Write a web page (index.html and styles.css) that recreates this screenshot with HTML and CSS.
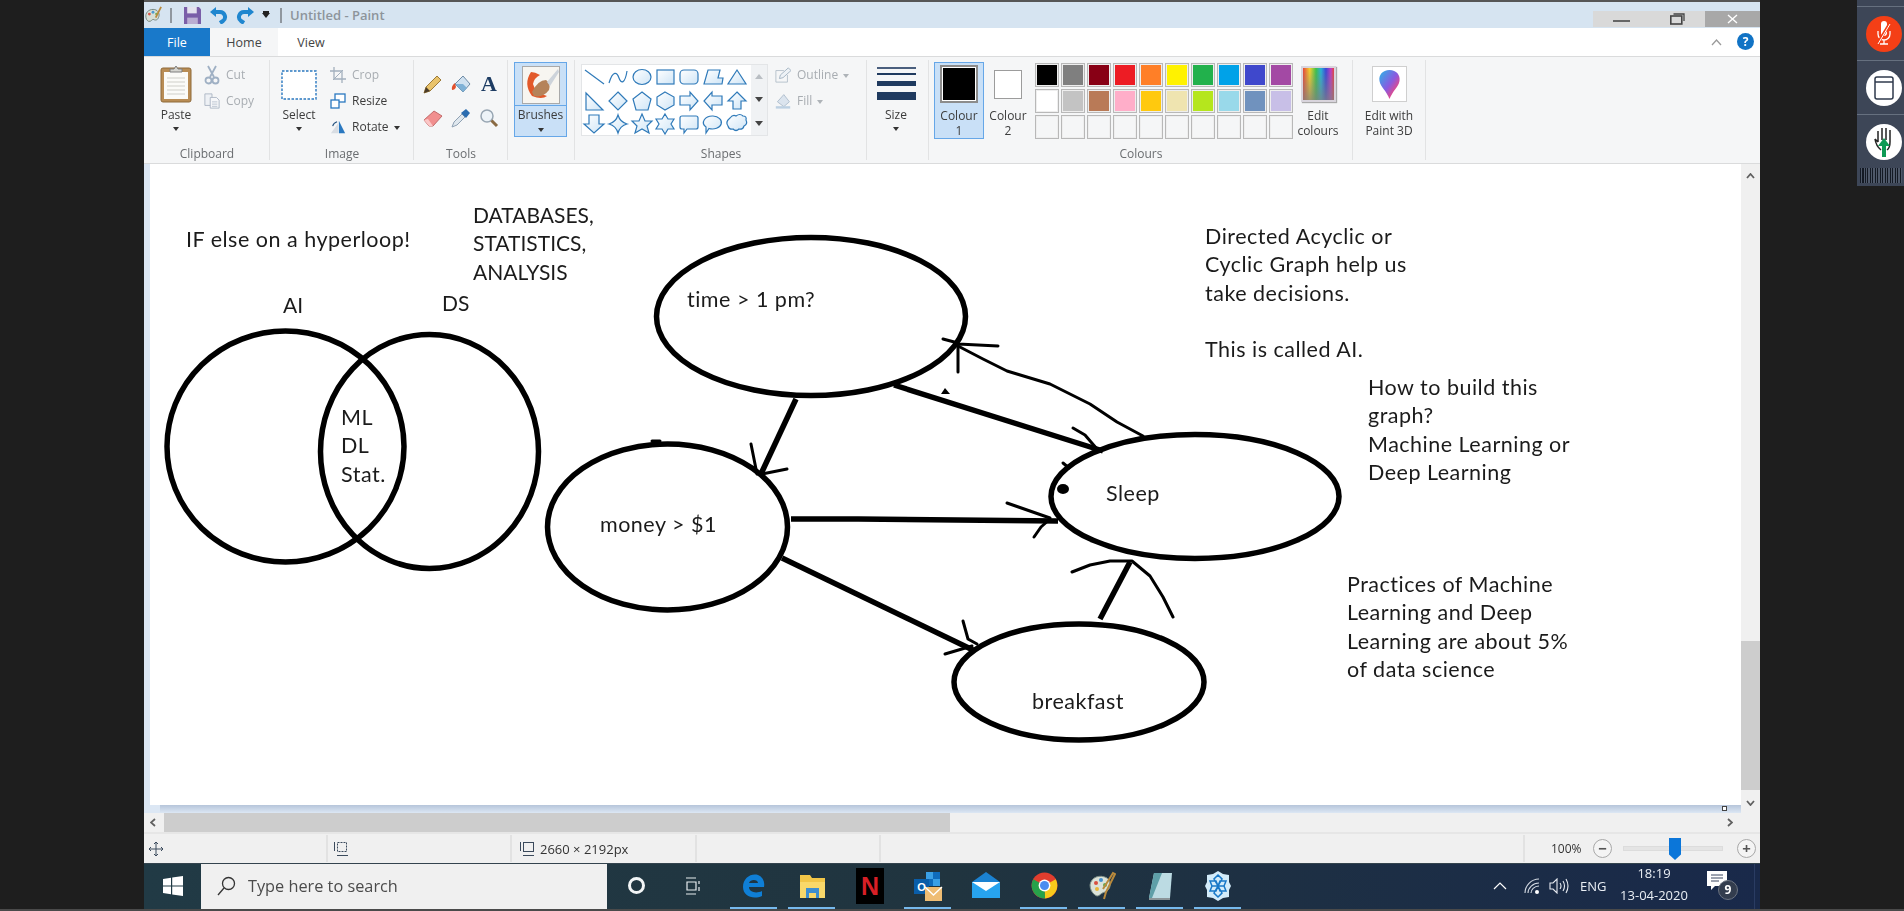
FILE: index.html
```html
<!DOCTYPE html>
<html lang="en">
<head>
<meta charset="utf-8">
<title>Untitled - Paint</title>
<link rel="stylesheet" href="styles.css">
</head>
<body>
<div class="screen">
  <div class="gutter-left"></div>
  <div class="window">
    <div class="topline"></div>
    <header class="titlebar">
      <svg class="qat-app" viewBox="0 0 20 20"><path d="M2 11c0-5 5-8 10-7 4 1 6 5 4 9-1 3-4 3-5 2-2-1-3 3-6 2-2-1-3-3-3-6z" fill="#d8dfd6" stroke="#6e7f77"/><circle cx="6" cy="9" r="1.6" fill="#d9574a"/><circle cx="10" cy="7" r="1.6" fill="#4e9ad0"/><circle cx="14" cy="9" r="1.6" fill="#6fae55"/><path d="M13 13 19 1" stroke="#b98a3c" stroke-width="2"/></svg>
      <span class="qat-sep"></span>
      <svg class="qat-save" viewBox="0 0 16 16"><path d="M0 0h14l2 2v14H0z" fill="#7a5ea8"/><path d="M3 0h9v6H3z" fill="#e4e2ee"/><path d="M3 10h10v6H3z" fill="#b9add2"/></svg>
      <svg class="qat-undo" viewBox="0 0 18 18"><path d="M3 6h7a5 5 0 0 1 3 9l-3 2" fill="none" stroke="#1f86cf" stroke-width="4"/><path d="M0 6l6-5v10z" fill="#1f86cf"/></svg>
      <svg class="qat-redo" viewBox="0 0 18 18"><path d="M15 6H8a5 5 0 0 0-3 9l3 2" fill="none" stroke="#1f86cf" stroke-width="4"/><path d="M18 6l-6-5v10z" fill="#1f86cf"/></svg>
      <span class="qat-drop"></span>
      <span class="qat-sep qat-sep-b"></span>
      <span class="app-title">Untitled - Paint</span>
      <div class="win-controls">
        <span class="win-btn win-min"><i class="min-glyph"></i></span>
        <span class="win-btn win-max"><svg width="15" height="12" viewBox="0 0 15 12"><rect x=".8" y="3" width="11" height="8" fill="none" stroke="#444" stroke-width="1.6"/><path d="M3.5 1h10.500v7" fill="none" stroke="#444" stroke-width="1.300"/></svg></span>
        <span class="win-btn win-close"><svg width="11" height="10" viewBox="0 0 11 10"><path d="M1 1l9 8M10 1L1 9" stroke="#fff" stroke-width="1.400"/></svg></span>
      </div>
    </header>
    <nav class="tabs">
      <span class="tab tab-file">File</span>
      <span class="tab tab-home">Home</span>
      <span class="tab tab-view">View</span>
      <svg class="collapse" width="11" height="7" viewBox="0 0 11 7"><path d="M1 6l4.500-5L10 6" fill="none" stroke="#9a9a9a" stroke-width="1.300"/></svg>
      <span class="help">?</span>
    </nav>
    <section class="ribbon">
      <div class="group g-clipboard">
        <div class="g-body">
          <div class="big-btn paste">
            <svg class="big-icon" width="32" height="38" viewBox="0 0 32 38"><rect x="1" y="3" width="30" height="34" rx="2" fill="#b98d55" stroke="#8f6b3b"/><rect x="4" y="7" width="24" height="27" fill="#fbfbf8"/><path d="M7 13h18M7 17h18M7 21h18M7 25h18M7 29h18" stroke="#cfcfc9"/><path d="M10 7V4h4l2-3 2 3h4v3z" fill="#d5d5d0" stroke="#7f7f7f"/></svg>
            <span class="big-label">Paste</span>
            <i class="caret"></i>
          </div>
          <div class="small-list sl-clip">
            <div class="small-row dim"><svg width="16" height="20" viewBox="0 0 16 20"><path d="M4 1l6 11M12 1L6 12" stroke="#9fb0c4" stroke-width="1.800"/><circle cx="4.500" cy="15.500" r="3" fill="none" stroke="#9fb0c4" stroke-width="1.800"/><circle cx="11.500" cy="15.500" r="3" fill="none" stroke="#9fb0c4" stroke-width="1.800"/></svg><span>Cut</span></div>
            <div class="small-row dim"><svg width="18" height="18" viewBox="0 0 18 18"><path d="M1 1h8v13H1z" fill="#eef1f5" stroke="#aab5c3"/><path d="M7 5h7l3 3v9H7z" fill="#f6f7f9" stroke="#aab5c3"/><path d="M9 10h6M9 12.500h6M9 15h6" stroke="#b8c2ce"/></svg><span>Copy</span></div>
          </div>
        </div>
        <div class="g-label">Clipboard</div>
      </div>
      <div class="group g-image">
        <div class="g-body">
          <div class="big-btn select">
            <svg class="big-icon" width="36" height="38" viewBox="0 0 36 38"><rect x="1" y="6" width="34" height="28" fill="#fff" stroke="#2a78c0" stroke-width="1.400" stroke-dasharray="2.500 1.500"/></svg>
            <span class="big-label">Select</span>
            <i class="caret"></i>
          </div>
          <div class="small-list sl-image">
            <div class="small-row dim"><svg width="16" height="16" viewBox="0 0 16 16"><path d="M4 0v12h12M0 4h12v12" fill="none" stroke="#a3b0be" stroke-width="1.300"/><path d="M3 13L13 3" stroke="#a3b0be"/></svg><span>Crop</span></div>
            <div class="small-row"><svg width="16" height="16" viewBox="0 0 16 16"><rect x="5" y="1" width="10" height="8" fill="#fff" stroke="#2a78c0" stroke-width="1.300"/><rect x="1" y="7" width="8" height="8" fill="#fff" stroke="#2a78c0" stroke-width="1.300"/></svg><span>Resize</span></div>
            <div class="small-row"><svg width="18" height="16" viewBox="0 0 18 16"><path d="M1 15L9 4v11z" fill="#d8dde3"/><path d="M10 1l7 14h-7z" fill="#2a78c0"/><path d="M3 7q1-4 5-5" fill="none" stroke="#26527f" stroke-width="1.200"/></svg><span>Rotate</span><i class="caret caret-inline"></i></div>
          </div>
        </div>
        <div class="g-label">Image</div>
      </div>
      <div class="group g-tools">
        <div class="g-body">
          <div class="tool-grid">
            <svg width="20" height="20" viewBox="0 0 20 20"><path d="M3 13L14 2l4 4L7 17 1 19z" fill="#e9c36b" stroke="#9c7a38"/><path d="M1 19l2-6 4 4z" fill="#4a3c2a"/></svg>
            <svg width="22" height="22" viewBox="0 0 22 22"><path d="M5 11l8-8 7 8-7 8z" fill="#cfe1f0" stroke="#6d8aa5"/><path d="M5 11l8 0 4 4-4 4z" fill="#7fb1d6"/><path d="M5 10q-4 3-3 7 3 0 4-3z" fill="#e1502c"/></svg>
            <span class="tool-a">A</span>
            <svg width="20" height="18" viewBox="0 0 20 18"><path d="M1 11L11 2l8 5-9 10H6z" fill="#f18f8f" stroke="#c26a6a"/><path d="M1 11l5 6h4l-5-7z" fill="#fbc7c7"/></svg>
            <svg width="20" height="20" viewBox="0 0 20 20"><path d="M1 19l2-5 8-8 3 3-8 8z" fill="#dfe7ee" stroke="#8fa1b3"/><path d="M10 5l5-4 4 4-4 5z" fill="#2a6cb0"/></svg>
            <svg width="20" height="20" viewBox="0 0 20 20"><circle cx="8" cy="8" r="6" fill="#edf3f8" stroke="#98a6b3" stroke-width="1.500"/><path d="M12.500 12.500L18 18" stroke="#8a6a43" stroke-width="3"/></svg>
          </div>
        </div>
        <div class="g-label"><span>Tools</span></div>
      </div>
      <div class="group g-brushes">
        <div class="g-body">
          <div class="brush-btn">
            <div class="brush-top">
              <svg width="38" height="38" viewBox="0 0 38 38"><rect x=".5" y=".5" width="37" height="37" fill="#f7f5f0" stroke="#a9a9a9"/><path d="M9 6q-8 12 1 24 10 4 15 0-12-3-14-12 1-6 7-9-5-3-9-3z" fill="#e2592a"/><path d="M10 26q6-12 14-12 5 3 3 10-6 8-15 6z" fill="#b5835a"/><path d="M25 16L36 3l1 3-9 14z" fill="#cdd3da"/></svg>
            </div>
            <div class="brush-bottom">
              <span class="big-label">Brushes</span>
              <i class="caret"></i>
            </div>
          </div>
        </div>
        <div class="g-label"></div>
      </div>
      <div class="group g-shapes">
        <div class="g-body">
          <div class="gallery">
            <svg class="gallery-shapes" width="169" height="70" viewBox="582 65 169 70">
              <defs><linearGradient id="sf" x1="0" y1="0" x2="1" y2="1"><stop offset="0" stop-color="#fff"/><stop offset="1" stop-color="#cfe5f6"/></linearGradient></defs>
              <path class="sn" d="M585 70L604 84"/>
              <path class="sn" d="M609 83C613 70 617 72 619 78S625 84 627 71"/>
              <ellipse class="sh" cx="642" cy="77" rx="9" ry="7.500"/>
              <rect class="sh" x="657" y="70" width="17" height="14"/>
              <rect class="sh" x="680" y="70" width="18" height="14" rx="4"/>
              <path class="sh" d="M704 84L708 70H720L718 78H723L722 84Z"/>
              <path class="sh" d="M737 70L746 84H728Z"/>
              <path class="sh" d="M586 93L603 110H586Z"/>
              <path class="sh" d="M618 92L627 101L618 110L609 101Z"/>
              <path class="sh" d="M642 92L651 99L648 110H636L633 99Z"/>
              <path class="sh" d="M665 92L674 97V105L665 110L657 105V97Z"/>
              <path class="sh" d="M680 96H690V92L698 101L690 110V105H680Z"/>
              <path class="sh" d="M722 96H712V92L704 101L712 110V105H722Z"/>
              <path class="sh" d="M737 92L746 101H741V109H733V101H728Z"/>
              <path class="sh" d="M589 115H599V124H604L594 133L584 124H589Z"/>
              <path class="sh" d="M618 115Q620 122 627 124Q620 126 618 133Q616 126 609 124Q616 122 618 115Z"/>
              <path class="sh" d="M642 114L645 121L652 121L647 126L649 133L642 129L635 133L637 126L632 121L639 121Z"/>
              <path class="sh" d="M665 114L668 119H674L671 124L674 129H668L665 134L662 129H656L659 124L656 119H662Z"/>
              <path class="sh" d="M682 116H696Q698 116 698 118V127Q698 129 696 129H687L684 133V129H682Q680 129 680 127V118Q680 116 682 116Z"/>
              <path class="sh" d="M713 116a9 6.500 0 1 1-4 12.500L706 133V127a9 6.500 0 0 1 7-11Z"/>
              <path class="sh" d="M730 118q3-4 6-2q4-3 7 0q4 0 3 4q2 4-2 6q-1 4-5 3q-3 3-6 0q-4 1-5-3q-3-4 2-8Z"/>
            </svg>
            <div class="gallery-scroll">
              <span class="gs gs-up"></span>
              <span class="gs gs-down"></span>
              <span class="gs gs-more"></span>
            </div>
          </div>
          <div class="small-list sl-shape">
            <div class="small-row dim"><svg width="18" height="18" viewBox="0 0 18 18"><path d="M1 4h9M1 4v13h13V9" fill="none" stroke="#b2bdc9"/><path d="M5 13l1-4 9-8 3 3-9 8z" fill="#eef2f6" stroke="#9fb0c0"/></svg><span>Outline</span><i class="caret caret-inline caret-dim"></i></div>
            <div class="small-row dim"><svg width="20" height="20" viewBox="0 0 20 20"><path d="M3 11l8-9 7 9-7 6z" fill="#dbe4ee" stroke="#a6b6c6"/><path d="M1 18h18" stroke="#bcd0e2" stroke-width="3"/></svg><span>Fill</span><i class="caret caret-inline caret-dim"></i></div>
          </div>
        </div>
        <div class="g-label">Shapes</div>
      </div>
      <div class="group g-size">
        <div class="g-body">
          <div class="big-btn size">
            <div class="big-icon size-lines"><i class="sl1"></i><i class="sl2"></i><i class="sl3"></i><i class="sl4"></i></div>
            <span class="big-label">Size</span>
            <i class="caret"></i>
          </div>
        </div>
        <div class="g-label"></div>
      </div>
      <div class="group g-colours">
        <div class="g-body">
          <div class="colour-btn colour-on">
            <div class="big-icon colour-box"><span class="swatch-one"></span></div>
            <span class="two-line">Colour<br>1</span>
          </div>
          <div class="colour-btn">
            <div class="big-icon colour-box"><span class="swatch-two"></span></div>
            <span class="two-line">Colour<br>2</span>
          </div>
          <div class="palette">
            <i class="sw c1"></i><i class="sw c2"></i><i class="sw c3"></i><i class="sw c4"></i><i class="sw c5"></i><i class="sw c6"></i><i class="sw c7"></i><i class="sw c8"></i><i class="sw c9"></i><i class="sw c10"></i>
            <i class="sw c11"></i><i class="sw c12"></i><i class="sw c13"></i><i class="sw c14"></i><i class="sw c15"></i><i class="sw c16"></i><i class="sw c17"></i><i class="sw c18"></i><i class="sw c19"></i><i class="sw c20"></i>
            <i class="sw"></i><i class="sw"></i><i class="sw"></i><i class="sw"></i><i class="sw"></i><i class="sw"></i><i class="sw"></i><i class="sw"></i><i class="sw"></i><i class="sw"></i>
          </div>
          <div class="colour-btn edit-colours">
            <div class="big-icon colour-box"><span class="rainbow"></span></div>
            <span class="two-line">Edit<br>colours</span>
          </div>
        </div>
        <div class="g-label">Colours</div>
      </div>
      <div class="group g-p3d">
        <div class="g-body">
          <div class="colour-btn p3d">
            <div class="big-icon colour-box"><svg width="35" height="36" viewBox="0 0 35 36"><defs><linearGradient id="dr" x1="0" y1="0" x2="1" y2="1"><stop offset="0" stop-color="#27b6e8"/><stop offset=".5" stop-color="#8a5ae0"/><stop offset=".8" stop-color="#f2477c"/><stop offset="1" stop-color="#fbb040"/></linearGradient></defs><rect x=".5" y=".5" width="34" height="35" fill="#fff" stroke="#cfcfcf"/><path d="M17.500 4c7 0 11 5 10 11-1 6-7 10-10 18-3-8-9-12-10-18C6.500 9 10.500 4 17.500 4z" fill="url(#dr)"/></svg></div>
            <span class="two-line">Edit with<br>Paint 3D</span>
          </div>
        </div>
        <div class="g-label"></div>
      </div>
    </section>
    <section class="workspace">
      <div class="canvas-wrap">
        <div class="canvas">
          <svg class="drawing" width="1591" height="639" viewBox="150 165 1591 639">
            <g class="thick">
              <ellipse cx="285.500" cy="447.500" rx="118.500" ry="115.500"/>
              <ellipse cx="429.500" cy="452.500" rx="109" ry="117"/>
              <ellipse cx="811" cy="317.500" rx="154.500" ry="79"/>
              <ellipse cx="667.500" cy="528" rx="120" ry="83"/>
              <ellipse cx="1195" cy="497.500" rx="144" ry="62"/>
              <ellipse cx="1079" cy="683" rx="125" ry="58"/>
              <path d="M796 400L760 477"/>
              <path d="M894 386L1103 452"/>
              <path d="M791 520L858 520L1058 522"/>
              <path d="M782 559L975 652"/>
              <path d="M1100 620L1130 563"/>
            </g>
            <g class="thin">
              <path d="M751 445L757 475M787 470L762 475"/>
              <path d="M1073 429L1085 436L1097 450"/>
              <path d="M1007 504L1050 519M1050 520L1041 528L1034 538"/>
              <path d="M963 622L968 640L977 645M945 655L972 647"/>
              <path d="M1072 573L1090 566L1110 562L1132 562L1150 577L1163 598L1173 618"/>
              <path d="M1143 437L1117 423L1090 405L1050 385L1007 372L983 360L958 347"/>
              <path d="M943 340L958 344M958 345L998 347M958 347V373"/>
              <path d="M1063 464L1069 469"/>
              <path d="M652 442L660 442"/>
            </g>
            <ellipse cx="1063" cy="490" rx="6" ry="5"/>
            <path d="M941 395L945 389L950 395Z"/>
          </svg>
          <div class="note n-hyper">IF else on a hyperloop!</div>
          <div class="note note-caps n-db">DATABASES,<br>STATISTICS,<br>ANALYSIS</div>
          <div class="note note-caps n-ai">AI</div>
          <div class="note note-caps n-ds">DS</div>
          <div class="note n-ml">ML<br>DL<br>Stat.</div>
          <div class="note n-time">time &gt; 1 pm?</div>
          <div class="note n-money">money &gt; $1</div>
          <div class="note n-sleep">Sleep</div>
          <div class="note n-break">breakfast</div>
          <div class="note n-dag">Directed Acyclic or<br>Cyclic Graph help us<br>take decisions.<br><br>This is called AI.</div>
          <div class="note n-how">How to build this<br>graph?<br>Machine Learning or<br>Deep Learning</div>
          <div class="note n-prac">Practices of Machine<br>Learning and Deep<br>Learning are about 5%<br>of data science</div>
        </div>
        <div class="canvas-shadow"><i class="grip"></i></div>
      </div>
      <div class="vscroll">
        <svg class="arrow-v" width="9" height="6" viewBox="0 0 9 6"><path d="M1 5l3.500-4L8 5" fill="none" stroke="#606060" stroke-width="1.800"/></svg>
        <span class="vthumb"></span>
        <svg class="arrow-v" width="9" height="6" viewBox="0 0 9 6"><path d="M1 1l3.500 4L8 1" fill="none" stroke="#606060" stroke-width="1.800"/></svg>
      </div>
    </section>
    <div class="hscroll">
      <svg width="6" height="9" viewBox="0 0 6 9"><path d="M5 1L1 4.500 5 8" fill="none" stroke="#606060" stroke-width="1.800"/></svg>
      <span class="hthumb"></span>
      <svg width="6" height="9" viewBox="0 0 6 9"><path d="M1 1l4 3.500L1 8" fill="none" stroke="#606060" stroke-width="1.800"/></svg>
    </div>
    <footer class="status">
      <div class="cell cell-a"><svg width="14" height="14" viewBox="0 0 14 14"><path d="M7 0v14M0 7h14M5 2l2-2 2 2M5 12l2 2 2-2M2 5L0 7l2 2M12 5l2 2-2 2" fill="none" stroke="#3b4a5c"/></svg></div>
      <div class="cell cell-a"><svg width="16" height="16" viewBox="0 0 16 16"><rect x="4.500" y="1.500" width="9" height="9" fill="none" stroke="#3b4a5c" stroke-dasharray="2 1"/><path d="M1.500 1v9M4 14.500h11" stroke="#3b4a5c"/></svg></div>
      <div class="cell cell-b"><svg width="16" height="16" viewBox="0 0 16 16"><rect x="4.500" y="1.500" width="10" height="9" fill="none" stroke="#3b4a5c"/><path d="M1.500 1v9M4 14.500h11" stroke="#3b4a5c"/></svg><span>2660 × 2192px</span></div>
      <div class="cell cell-a"></div>
      <div class="cell cell-c"></div>
      <div class="zoomctl">
        <span class="zoom-pct">100%</span>
        <span class="zoom-btn">−</span>
        <span class="zoom-track"><i class="zoom-thumb"></i></span>
        <span class="zoom-btn">+</span>
      </div>
    </footer>
    <div class="taskbar">
      <div class="start"><svg width="20" height="20" viewBox="0 0 20 20"><path d="M0 3l8-1.200V9.500H0zM9.200 1.600L20 0v9.500H9.200zM0 10.500h8v7.700L0 17zM9.200 10.500H20V20L9.200 18.400z" fill="#fff"/></svg></div>
      <div class="search"><svg width="19" height="20" viewBox="0 0 19 20"><circle cx="11.500" cy="7.500" r="6" fill="none" stroke="#333" stroke-width="1.300"/><path d="M7 12L1 19" stroke="#333" stroke-width="1.300"/></svg><span>Type here to search</span></div>
      <div class="tb-item tb-cortana"><i class="cortana"></i></div>
      <div class="tb-item tb-view"><svg width="16" height="20" viewBox="0 0 16 20"><path d="M1 2h10M1 18h10M2 6h9v8H2zM14 5v3M14 11v4" fill="none" stroke="#e8edf0" stroke-width="1.200"/></svg></div>
      <div class="tb-item on"><svg width="24" height="24" viewBox="0 0 24 24"><path d="M22 13H7c0 5 7 7 13 4v5c-9 4-19 0-19-9C1 4 9-1 16 1c5 2 7 7 6 12zM7 9h9c0-4-8-4-9 0z" fill="#0f7fd6"/></svg></div>
      <div class="tb-item on"><svg width="27" height="26" viewBox="0 0 27 26"><path d="M1 2h10l2 3h13v20H1z" fill="#f2c648"/><path d="M1 9h25v16H1z" fill="#f9d86a"/><path d="M7 15h13v10h-3v-5h-7v5H7z" fill="#3e8ed0"/></svg></div>
      <div class="tb-item"><span class="netflix">N</span></div>
      <div class="tb-item on"><svg width="30" height="30" viewBox="0 0 30 30"><path d="M13 1h14v14H13z" fill="#0f6cbd"/><path d="M13 1h7v7h-7zM20 8h7v7h-7z" fill="#3aa0e6"/><rect x="1" y="8" width="15" height="15" fill="#0a5da8"/><text class="outlook-o" x="8.500" y="20">O</text><path d="M12 16h17v14H12z" fill="#efbd74"/><path d="M12 16l8.500 8L29 16" fill="none" stroke="#fff" stroke-width="1.300"/></svg></div>
      <div class="tb-item"><svg width="30" height="30" viewBox="0 0 30 30"><path d="M15 1L29 11H1z" fill="#1b82d1"/><path d="M1 11h28v16H1z" fill="#27a3ee"/><path d="M1 11l14 9 14-9" fill="#fff"/></svg></div>
      <div class="tb-item on"><svg width="27" height="27" viewBox="0 0 48 48"><circle cx="24" cy="24" r="23" fill="#e23d2e"/><path d="M24 24L44 13a23 23 0 0 1-19 34z" fill="#f8c91b"/><path d="M24 24L25 47A23 23 0 0 1 4 13z" fill="#27a24a"/><circle cx="24" cy="24" r="10.500" fill="#fff"/><circle cx="24" cy="24" r="8" fill="#4a8df0"/></svg></div>
      <div class="tb-item on"><svg width="28" height="30" viewBox="0 0 28 30"><path d="M2 14C3 6 12 3 19 7c5 4 4 12-2 14-5 1-6 6-10 3-3-2-5-6-5-10z" fill="#dbe2d8" stroke="#7d8f88"/><circle cx="8" cy="12" r="2" fill="#d85040"/><circle cx="13" cy="9" r="2" fill="#4390cf"/><circle cx="17" cy="14" r="2" fill="#63a84f"/><circle cx="9" cy="18" r="2" fill="#e7b63b"/><path d="M15 18L25 2l2 1-9 18-2 7" fill="none" stroke="#b98a3c" stroke-width="2"/></svg></div>
      <div class="tb-item on"><svg width="28" height="28" viewBox="0 0 28 28"><path d="M8 1h18l-2 25H3z" fill="#bcdbe3"/><path d="M8 1h8L6 26H3z" fill="#5f9fa8"/><path d="M3 26h21v2H3z" fill="#8b9599"/></svg></div>
      <div class="tb-item on"><svg width="26" height="32" viewBox="0 0 26 32"><path d="M13 1l5 3 6 1v7l2 4-2 4v7l-6 1-5 3-5-3-6-1v-7l-2-4 2-4V5l6-1z" fill="#d3ecfa"/><path d="M13 5l4 4-4 7-4-7zM5 11h6l2 5H7zM21 11h-6l-2 5h6zM5 21h6l2-5H7zM21 21h-6l-2-5h6zM13 27l4-4-4-7-4 7z" fill="none" stroke="#1878c8" stroke-width="1.500"/></svg></div>
      <div class="tray">
        <svg class="t-chev" width="14" height="8" viewBox="0 0 14 8"><path d="M1 7l6-6 6 6" fill="none" stroke="#fff" stroke-width="1.200"/></svg>
        <svg class="t-wifi" width="16" height="16" viewBox="0 0 16 16"><path d="M1 15C1 8 7 1 15 1M4 15c0-5 5-10 11-10M7 15c0-3 3-7 8-7" fill="none" stroke="#d5dbe4" stroke-width="1.100"/><circle cx="13" cy="14" r="2" fill="#fff"/></svg>
        <svg class="t-sound" width="20" height="16" viewBox="0 0 20 16"><path d="M1 5h3l4-4v14l-4-4H1z" fill="none" stroke="#e8ecf2" stroke-width="1.100"/><path d="M11 5q2 3 0 6M14 3q3 5 0 10M17 1q4 7 0 14" fill="none" stroke="#e8ecf2" stroke-width="1.100"/></svg>
        <span class="t-eng">ENG</span>
        <span class="t-clock">18:19<br>13-04-2020</span>
        <span class="t-notif"><svg width="22" height="22" viewBox="0 0 22 22"><path d="M1 2h20v15H9l-4 4v-4H1z" fill="#fff"/><path d="M5 6h12M5 9h12M5 12h8" stroke="#3a4660"/></svg><b class="badge">9</b></span>
      </div>
    </div>
  </div>
  <aside class="gutter-right">
    <div class="float-panel">
      <div class="fp-head"></div>
      <div class="fp-row"><span class="fp-circle fp-red"><svg width="18" height="26" viewBox="0 0 18 26"><path d="M6 3a3 3 0 0 1 6 0v9a3 3 0 0 1-6 0z" fill="#fff"/><path d="M3 10v3a6 6 0 0 0 12 0v-3M9 19v4M5 23h8" fill="none" stroke="#fff" stroke-width="1.300"/><path d="M15 2L3 22" stroke="#f43f16" stroke-width="3"/><path d="M15 3L3 23" stroke="#fff" stroke-width="1"/></svg></span></div>
      <div class="fp-row"><span class="fp-circle"><svg width="20" height="24" viewBox="0 0 20 24"><rect x="1" y="1" width="18" height="22" rx="2" fill="none" stroke="#2f3a4c" stroke-width="1.500"/><path d="M1 6h18" stroke="#2f3a4c" stroke-width="1.500"/></svg></span></div>
      <div class="fp-row"><span class="fp-circle"><svg width="24" height="32" viewBox="0 0 24 32"><path d="M6 16V5M10 14V2M14 14V2M18 16V4M18 16q0 6-3 8M6 16l-3-3M3 13q1 7 6 11" fill="none" stroke="#222" stroke-width="1.500"/><path d="M12 12l6 8h-4v11h-4V20H6z" fill="#0e9a55"/></svg></span></div>
      <div class="fp-grip"></div>
    </div>
  </aside>
</div>
<div class="bottomline"></div>
</body>
</html>
```
FILE: styles.css
```css
* { box-sizing: border-box; }
html, body { margin: 0; height: 911px; overflow: hidden; background: #1e1e1e; }
body { font: 12px/16px "Open Sans", "Noto Sans", sans-serif; color: #3c3c3c; }
i { display: block; font-style: normal; }
svg { display: block; flex: none; }

.screen { display: flex; height: 909px; }
.gutter-left { width: 144px; flex: none; }
.gutter-right { flex: 1; display: flex; justify-content: flex-end; align-items: flex-start; }
.bottomline { height: 2px; background: #4a4a4a; }
.window { width: 1616px; flex: none; display: flex; flex-direction: column; filter: blur(.4px); }
.topline { height: 2px; background: #565656; }

/* title bar */
.titlebar { height: 26px; background: #d6e4f1; display: flex; align-items: center; }
.qat-app { width: 18px; height: 18px; }
.qat-sep { width: 2px; height: 15px; background: #8f979f; margin-left: 8px; }
.qat-save { width: 17px; height: 17px; margin-left: 12px; }
.qat-undo { width: 18px; height: 18px; margin-left: 9px; }
.qat-redo { width: 18px; height: 18px; margin-left: 8px; }
.qat-drop { width: 0; height: 0; margin-left: 8px; border: 4px solid transparent; border-top: 5px solid #222; border-bottom: 0; box-shadow: 0 -3px 0 -1px #222; }
.qat-sep-b { margin-left: 10px; }
.app-title { margin-left: 8px; font-size: 13px; font-weight: 600; color: #8d949b; }
.win-controls { margin-left: auto; align-self: flex-end; display: flex; height: 16px; margin-bottom: 1px; }
.win-btn { display: flex; align-items: center; justify-content: center; height: 16px; background: #d9d9d9; }
.win-min, .win-max { width: 56px; }
.win-close { width: 55px; background: #a8a8a8; }
.min-glyph { width: 17px; height: 2px; background: #666; margin-top: 3px; }

/* tabs */
.tabs { height: 28px; background: #fff; display: flex; align-items: stretch; }
.tab { display: flex; align-items: center; justify-content: center; font-size: 12.500px; color: #444; padding-top: 2px; }
.tab-file { width: 66px; background: #1979ca; color: #fff; }
.tab-home { width: 68px; background: #f5f6f7; }
.tab-view { width: 66px; }
.collapse { margin: auto 0 auto auto; }
.help { width: 17px; height: 17px; margin: 5px 6px 0 15px; border-radius: 50%; background: #1173c5; color: #fff; font: 700 12px/17px "Open Sans", sans-serif; text-align: center; }

/* ribbon */
.ribbon { height: 108px; background: #f5f6f7; border-top: 1px solid #dadbdc; border-bottom: 1px solid #dadbdc; display: flex; }
.group { display: flex; flex-direction: column; flex: none; position: relative; }
.group::after { content: ""; position: absolute; top: 3px; bottom: 3px; right: 0; width: 1px; background: #e2e3e4; }
.g-body { flex: 1; display: flex; min-height: 0; }
.g-label { height: 20px; line-height: 21px; text-align: center; color: #6a6d70; flex: none; }
.g-clipboard { width: 126px; }
.g-image { width: 144px; }
.g-tools { width: 94px; }
.g-brushes { width: 67px; }
.g-shapes { width: 292px; }
.g-size { width: 62px; }
.g-colours { width: 424px; }
.g-p3d { width: 73px; }

.big-btn { display: flex; flex-direction: column; align-items: center; }
.big-icon { margin-top: 8px; height: 38px; }
.big-label { display: block; height: 16px; line-height: 16px; margin-top: 4px; }
.caret { width: 0; height: 0; margin-top: 4px; border: 3.500px solid transparent; border-top: 4px solid #333; border-bottom: 0; }
.caret-inline { margin: 1px 0 0 5px; }
.caret-dim { border-top-color: #aeb3b8; }
.paste { width: 40px; margin-left: 12px; }
.select { width: 44px; margin-left: 7px; }
.small-list { padding-top: 5px; display: flex; flex-direction: column; }
.small-row { height: 26px; display: flex; align-items: center; }
.small-row svg { width: 16px; margin-right: 6px; }
.small-row.dim { color: #a8adb2; }
.sl-clip { margin-left: 8px; }
.sl-image { margin-left: 9px; }
.sl-shape { margin-left: 8px; }

.tool-grid { margin: 10px 0 0 5px; display: grid; grid-template-columns: repeat(3, 28px); grid-auto-rows: 34px; justify-items: center; align-items: center; }
.tool-a { font: 700 22px/22px "Liberation Serif", serif; color: #1d3c63; }

.brush-btn { margin: 5px 0 0 6px; width: 53px; height: 75px; border: 1px solid #66a7e8; background: #c9e0f7; }
.brush-top { height: 43px; border-bottom: 1px solid #66a7e8; display: flex; justify-content: center; padding-top: 3px; }
.brush-bottom { display: flex; flex-direction: column; align-items: center; }
.brush-bottom .big-label { margin-top: 1px; }
.brush-bottom .caret { margin-top: 5px; }

.gallery { margin: 8px 0 0 7px; width: 185px; height: 70px; display: flex; background: #fff; box-shadow: 0 0 0 1px #e3e5e7; }
.gallery-shapes { fill: none; }
.sh { fill: url(#sf); stroke: #2f7ab9; stroke-width: 1.200; }
.sn { fill: none; stroke: #2f7ab9; stroke-width: 1.200; }
.gallery-scroll { width: 16px; background: #f0f2f4; display: flex; flex-direction: column; }
.gs { flex: 1; display: flex; align-items: center; justify-content: center; }
.gs::before { content: ""; border: 4px solid transparent; }
.gs-up::before { border-bottom: 5px solid #b9bec3; border-top: 0; }
.gs-down::before { border-top: 5px solid #444; border-bottom: 0; }
.gs-more::before { border-top: 5px solid #444; border-bottom: 0; box-shadow: 0 -4px 0 -3px #444; }

.size { width: 58px; }
.size-lines { width: 39px; padding-top: 2px; display: flex; flex-direction: column; margin-top: 8px; }
.size-lines i { background: #1f3a5f; }
.sl1 { height: 1.500px; margin-top: 0; opacity: .8; }
.sl2 { height: 2px; margin-top: 4px; }
.sl3 { height: 5px; margin-top: 6px; }
.sl4 { height: 8px; margin-top: 6px; }

.colour-btn { display: flex; flex-direction: column; align-items: center; width: 48px; }
.colour-on { width: 50px; height: 77px; margin: 5px 0 0 5px; background: #c9e0f7; border: 1px solid #66a7e8; }
.colour-on .big-icon { margin-top: 2px; }
.colour-btn .big-icon { display: flex; align-items: center; justify-content: center; }
.swatch-one { width: 38px; height: 38px; background: #000; border: 2px solid #8c8c8c; box-shadow: inset 0 0 0 1px #fff; }
.swatch-two { width: 28px; height: 29px; background: #fff; border: 1px solid #9c9c9c; }
.two-line { line-height: 15px; margin-top: 5px; text-align: center; white-space: nowrap; }
.colour-btn:not(.colour-on) .big-icon { margin-top: 8px; }
.palette { margin: 6px 0 0 3px; display: grid; grid-template-columns: repeat(10, 24px); grid-auto-rows: 24px; gap: 2px; width: 258px; height: 76px; }
.sw { border: 1px solid #b8b8b8; padding: 1px; background: transparent content-box; box-shadow: inset 0 0 0 1px #eee; }
.c1 { background-color: #000; } .c2 { background-color: #7f7f7f; } .c3 { background-color: #880015; } .c4 { background-color: #ed1c24; } .c5 { background-color: #ff7f27; }
.c6 { background-color: #fff200; } .c7 { background-color: #22b14c; } .c8 { background-color: #00a2e8; } .c9 { background-color: #3f48cc; } .c10 { background-color: #a349a4; }
.c11 { background-color: #fff; } .c12 { background-color: #c3c3c3; } .c13 { background-color: #b97a57; } .c14 { background-color: #ffaec9; } .c15 { background-color: #ffc90e; }
.c16 { background-color: #efe4b0; } .c17 { background-color: #b5e61d; } .c18 { background-color: #99d9ea; } .c19 { background-color: #7092be; } .c20 { background-color: #c8bfe7; }
.edit-colours { width: 50px; }
.rainbow { width: 35px; height: 36px; border: 2px solid #d8d4dc; box-shadow: 1px 1px 1px #aaa; background: linear-gradient(180deg, transparent 0, rgba(128,128,128,.75) 100%), linear-gradient(90deg, #e8433a, #f6d32d 22%, #3cc24a 42%, #26b3d9 58%, #3a46d8 74%, #c13cc4 90%, #e8433a); }
.p3d { width: 72px; }

/* workspace */
.workspace { flex: 1; min-height: 0; display: flex; }
.canvas-wrap { flex: 1; background: #dce7f4; padding-left: 6px; display: flex; flex-direction: column; }
.canvas { flex: 1; background: #fff; position: relative; overflow: hidden; }
.canvas-shadow { height: 8px; margin-left: 10px; background: linear-gradient(180deg, #b6c5da, #dce7f4); display: flex; justify-content: flex-end; padding-right: 14px; }
.grip { width: 5px; height: 5px; background: #fff; border: 1px solid #444; margin-top: 1px; }
.drawing { position: absolute; left: 0; top: 0; }
.thick ellipse, .thick path { fill: none; stroke: #000; stroke-width: 5.500; }
.thin path { fill: none; stroke: #000; stroke-width: 3; stroke-linecap: round; stroke-linejoin: round; }
.note { position: absolute; font: 21.500px/28.300px "Lato", "Carlito", sans-serif; letter-spacing: .5px; color: #1b1b1b; white-space: nowrap; }
.note-caps { font-size: 21px; letter-spacing: 0; }
.n-hyper { left: 36px; top: 61px; }
.n-db { left: 323px; top: 37px; }
.n-ai { left: 133px; top: 127px; }
.n-ds { left: 292px; top: 125px; }
.n-ml { left: 191px; top: 239px; }
.n-time { left: 537px; top: 121px; }
.n-money { left: 450px; top: 346px; }
.n-sleep { left: 956px; top: 315px; }
.n-break { left: 882px; top: 523px; }
.n-dag { left: 1055px; top: 58px; }
.n-how { left: 1218px; top: 209px; }
.n-prac { left: 1197px; top: 406px; }

.vscroll { width: 19px; background: #f0f0f0; display: flex; flex-direction: column; align-items: center; padding: 9px 0 7px; }
.vthumb { width: 100%; height: 149px; margin-top: 462px; background: #cdcdcd; }
.vscroll .arrow-v:last-child { margin-top: auto; }
.hscroll { height: 21px; flex: none; background: #f0f0f0; border-bottom: 2px solid #e6e6e6; display: flex; align-items: center; padding: 0 27px 0 6px; }
.hthumb { width: 786px; height: 100%; margin-left: 8px; background: #cdcdcd; }
.hscroll svg:last-child { margin-left: auto; }

/* status */
.status { height: 29px; flex: none; background: #f0f0f0; display: flex; align-items: center; }
.cell { height: 27px; display: flex; align-items: center; border-right: 2px solid #e2e2e2; padding-left: 5px; flex: none; }
.cell-a { width: 184px; }
.cell-b { width: 185px; gap: 5px; color: #333; padding-left: 7px; font-size: 13px; }
.cell-c { width: 644px; }
.zoomctl { flex: 1; display: flex; align-items: center; padding-left: 26px; color: #333; }
.zoom-pct { width: 37px; }
.zoom-btn { width: 19px; height: 19px; margin-left: 5px; border: 1px solid #a8a8a8; border-radius: 50%; font: 700 15px/16px "Open Sans", sans-serif; text-align: center; color: #555; background: #f4f4f4; }
.zoom-track { width: 100px; height: 5px; margin: 0 9px 0 11px; background: #e4e4e4; border: 1px solid #dcdcdc; position: relative; }
.zoom-thumb { position: absolute; left: 45px; top: -9px; width: 12px; height: 22px; background: #0b76d9; clip-path: polygon(0 0, 100% 0, 100% 75%, 50% 100%, 0 75%); }

/* taskbar */
.taskbar { height: 46px; flex: none; display: flex; align-items: stretch; background: linear-gradient(90deg, #213a45 0, #20343f 50%, #19294a 100%); border-top: 1px solid #34444e; position: relative; }
.start { width: 57px; display: flex; justify-content: center; align-items: center; padding-bottom: 2px; }
.search { width: 406px; background: #f0f0f0; display: flex; align-items: center; padding: 0 0 2px 16px; gap: 12px; font: 16.300px "Open Sans", sans-serif; color: #4b4b4b; }
.tb-item { width: 58px; display: flex; align-items: center; justify-content: center; position: relative; padding-bottom: 2px; }
.tb-view { width: 56px; margin-right: 4px; }
.tb-item.on::after { content: ""; position: absolute; left: 5px; right: 6px; bottom: 0; height: 2px; background: #76b9ed; }
.cortana { width: 17px; height: 17px; border: 3px solid #f2f5f6; border-radius: 50%; }
.netflix { width: 28px; height: 36px; background: #000; color: #d81f26; font: 700 25px/36px "Liberation Sans", sans-serif; text-align: center; }
.outlook-o { font: 700 11px "Liberation Sans", sans-serif; fill: #fff; text-anchor: middle; }
.tray { margin-left: auto; display: flex; align-items: center; color: #e9eef4; padding: 0 22px 2px 0; position: relative; }
.tray::after { content: ""; position: absolute; right: 5px; top: 0; bottom: 0; width: 1px; background: #2a3c62; }
.t-chev { margin-right: 17px; }
.t-wifi { margin-right: 9px; }
.t-sound { margin-right: 11px; }
.t-eng { width: 36px; font-size: 13px; }
.t-clock { width: 76px; margin-top: -3px; font-size: 13px; line-height: 22px; text-align: center; }
.t-notif { width: 32px; margin-left: 14px; height: 34px; position: relative; display: block; }
.badge { position: absolute; left: 12px; top: 11px; width: 20px; height: 20px; border-radius: 50%; background: #333d4e; border: 1px solid #6b7380; color: #fff; font: 700 12px/18px "Open Sans", sans-serif; text-align: center; }

/* floating meeting panel */
.float-panel { width: 47px; height: 186px; background: #3d4657; filter: blur(.3px); }
.fp-head { height: 7px; border-bottom: 1px solid #66707f; }
.fp-row { height: 54px; border-bottom: 1px solid #66707f; display: flex; align-items: center; padding-left: 9px; }
.fp-row:nth-child(4) { border-bottom: 0; }
.fp-circle { width: 36px; height: 36px; border-radius: 50%; background: #fff; display: flex; align-items: center; justify-content: center; }
.fp-red { background: #f43f16; }
.fp-grip { height: 15px; margin: -1px 2px 0 3px; background: repeating-linear-gradient(90deg, #141a24 0 1px, #4f596a 1px 2.500px); }
```
